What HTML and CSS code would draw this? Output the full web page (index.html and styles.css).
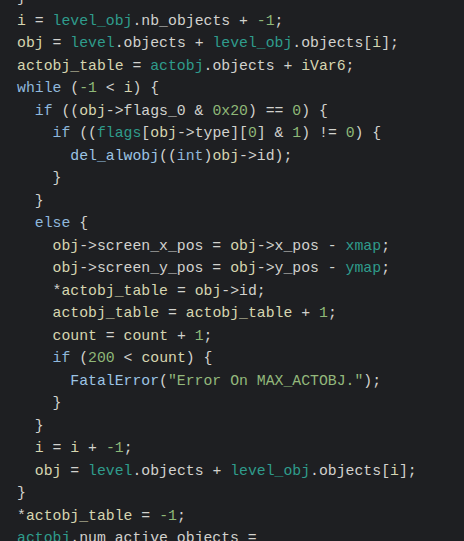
FILE: index.html
```html
<!DOCTYPE html>
<html>
<head>
<meta charset="utf-8">
<link rel="stylesheet" href="styles.css">
</head>
<body>
<pre class="code"><span class="p">}</span>
<span class="v">i</span> <span class="p">=</span> <span class="g">level_obj</span><span class="p">.nb_objects +</span> <span class="n">-1</span><span class="p">;</span>
<span class="v">obj</span> <span class="p">=</span> <span class="g">level</span><span class="p">.objects +</span> <span class="g">level_obj</span><span class="p">.objects[</span><span class="v">i</span><span class="p">];</span>
<span class="v">actobj_table</span> <span class="p">=</span> <span class="g">actobj</span><span class="p">.objects +</span> <span class="v">iVar6</span><span class="p">;</span>
<span class="k">while</span> <span class="p">(</span><span class="n">-1</span> <span class="p">&lt;</span> <span class="v">i</span><span class="p">) {</span>
  <span class="k">if</span> <span class="p">((</span><span class="v">obj</span><span class="p">-&gt;flags_0 &amp;</span> <span class="n">0x20</span><span class="p">) ==</span> <span class="n">0</span><span class="p">) {</span>
    <span class="k">if</span> <span class="p">((</span><span class="g">flags</span><span class="p">[</span><span class="v">obj</span><span class="p">-&gt;type][</span><span class="n">0</span><span class="p">] &amp;</span> <span class="n">1</span><span class="p">) !=</span> <span class="n">0</span><span class="p">) {</span>
      <span class="f">del_alwobj</span><span class="p">((</span><span class="k">int</span><span class="p">)</span><span class="v">obj</span><span class="p">-&gt;id);</span>
    <span class="p">}</span>
  <span class="p">}</span>
  <span class="k">else</span> <span class="p">{</span>
    <span class="v">obj</span><span class="p">-&gt;screen_x_pos =</span> <span class="v">obj</span><span class="p">-&gt;x_pos -</span> <span class="g">xmap</span><span class="p">;</span>
    <span class="v">obj</span><span class="p">-&gt;screen_y_pos =</span> <span class="v">obj</span><span class="p">-&gt;y_pos -</span> <span class="g">ymap</span><span class="p">;</span>
    <span class="p">*</span><span class="v">actobj_table</span> <span class="p">=</span> <span class="v">obj</span><span class="p">-&gt;id;</span>
    <span class="v">actobj_table</span> <span class="p">=</span> <span class="v">actobj_table</span> <span class="p">+</span> <span class="n">1</span><span class="p">;</span>
    <span class="v">count</span> <span class="p">=</span> <span class="v">count</span> <span class="p">+</span> <span class="n">1</span><span class="p">;</span>
    <span class="k">if</span> <span class="p">(</span><span class="n">200</span> <span class="p">&lt;</span> <span class="v">count</span><span class="p">) {</span>
      <span class="f">FatalError</span><span class="p">(</span><span class="s">"Error On MAX_ACTOBJ."</span><span class="p">);</span>
    <span class="p">}</span>
  <span class="p">}</span>
  <span class="v">i</span> <span class="p">=</span> <span class="v">i</span> <span class="p">+</span> <span class="n">-1</span><span class="p">;</span>
  <span class="v">obj</span> <span class="p">=</span> <span class="g">level</span><span class="p">.objects +</span> <span class="g">level_obj</span><span class="p">.objects[</span><span class="v">i</span><span class="p">];</span>
<span class="p">}</span>
<span class="p">*</span><span class="v">actobj_table</span> <span class="p">=</span> <span class="n">-1</span><span class="p">;</span>
<span class="g">actobj</span><span class="p">.num_active_objects =</span>
</pre>
</body>
</html>
```

FILE: styles.css
```css
html, body {
  margin: 0;
  padding: 0;
  background: #1e1f22;
  overflow: hidden;
}

.code {
  margin: -12.75px 0 0 0;
  padding: 0 0 0 17px;
  font-family: "Liberation Mono", "Courier New", monospace;
  font-size: 14.8px;
  line-height: 22.5px;
  color: #d0d0cc;
  white-space: pre;
}

.p { color: #d2d2ce; }
.v { color: #d6d6b0; }
.g { color: #2f9c8c; }
.k { color: #8fb8dc; }
.f { color: #9cc4e4; }
.n { color: #8fb878; }
.s { color: #93b87c; }
```
